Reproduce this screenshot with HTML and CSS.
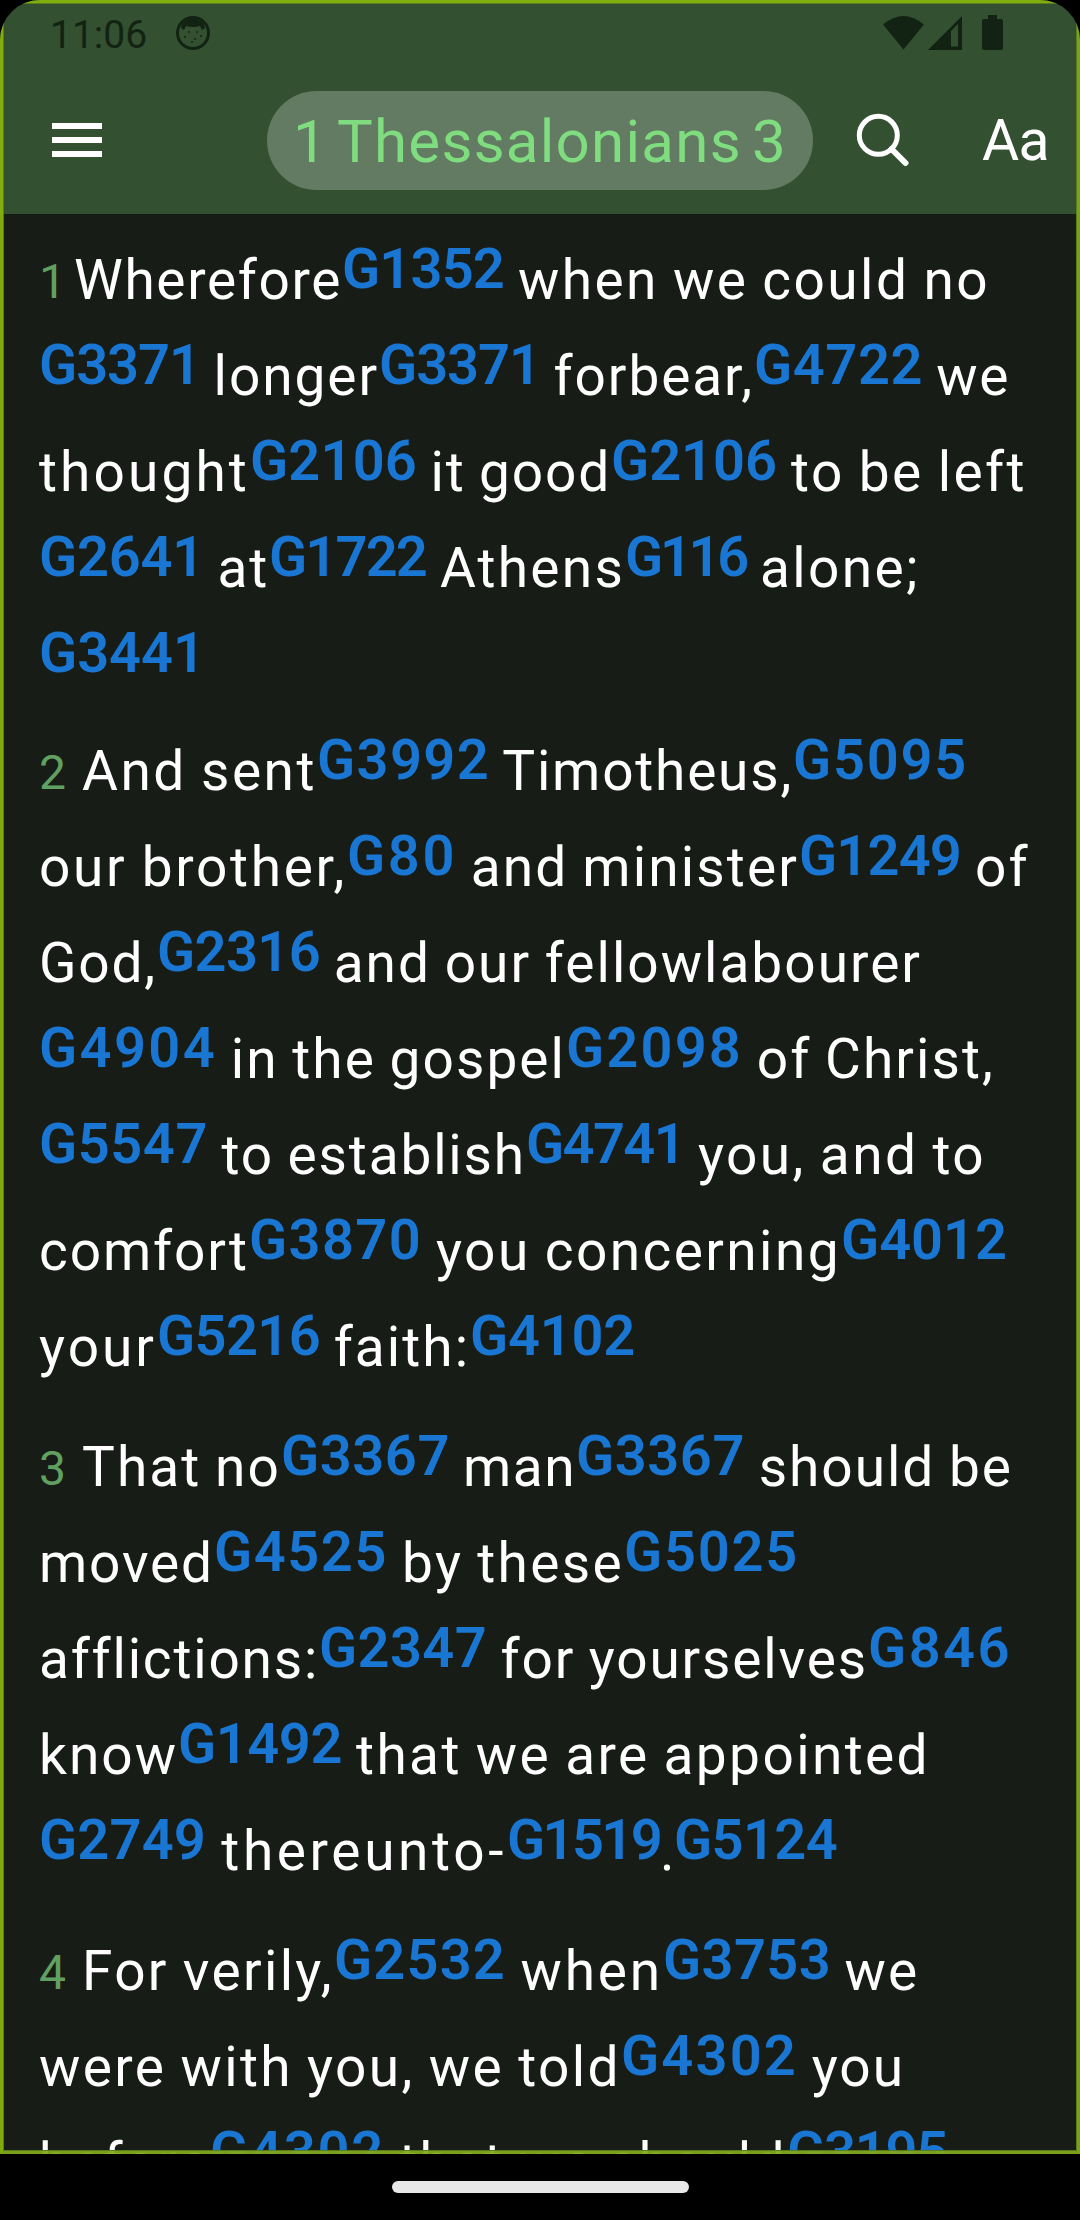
FILE: index.html
```html
<!DOCTYPE html>
<html lang="en">
<head>
  <meta charset="UTF-8" />
  <meta name="viewport" content="width=device-width, initial-scale=1.0"/>
  <title>1 Thessalonians 3</title>
  <link rel="stylesheet" href="styles.css">
</head>
<body>
  <div class="screen">
    <header>
      <div class="status">
        <span class="time">11:06</span>
        <svg class="face" width="36" height="36" viewBox="0 0 36 36">
          <circle cx="18" cy="18" r="15.5" fill="none" stroke="#132313" stroke-width="3"/>
          <path d="M6 13 L7 9 Q18 -2 29 9 L30 13 L27 15 L25 11 Q18 13 11 11 L9 15 Z" fill="#132313"/>
          <g fill="#132313"><circle cx="14" cy="17" r="1"/><circle cx="22" cy="17" r="1"/><circle cx="10" cy="22" r="1"/><circle cx="26" cy="21" r="1"/><circle cx="20" cy="24" r="1"/><circle cx="17" cy="27" r="1"/></g>
        </svg>
        <svg class="system" width="122" height="36" viewBox="0 0 122 36" fill="#132313">
          <path d="M0 9.5 Q20.500 -7.500 41 9.500 L20.500 34.500 Z"/>
          <path fill-rule="evenodd" d="M45 35 L79 1 V35 Z M68 16 V31.500 H75 V9 Z"/>
          <path d="M105 0 H114 V4 H118 Q120 4 120 6 V33 Q120 35 118 35 H101 Q99 35 99 33 V6 Q99 4 101 4 H105 Z"/>
        </svg>
      </div>
      <nav>
        <svg class="menu" width="50" height="34" viewBox="0 0 50 34" fill="#fff">
          <path d="M0 0H50V6H0ZM0 14H50V20H0ZM0 28H50V34H0Z"/>
        </svg>
        <div class="chapter"><span data-w="494">1 Thessalonians 3</span></div>
        <svg class="search" width="54" height="54" viewBox="0 0 54 54" fill="none" stroke="#fff">
          <circle cx="22.300" cy="22.300" r="19" stroke-width="5"/>
          <path d="M35.500 36 L49.500 50" stroke-width="6" stroke-linecap="round"/>
        </svg>
        <span class="size" data-w="67">Aa</span>
      </nav>
    </header>

    <main>
      <div class="verse short">
        <p><i data-x="74">1 </i><span data-x="342">Wherefore</span><b data-x="504">G1352</b><span data-x="990"> when we could no</span></p>
        <p><b data-x="200">G3371</b><span data-x="379">&nbsp;longer</span><b data-x="540">G3371</b><span data-x="754"> forbear,</span><b data-x="923">G4722</b><span data-x="1010"> we</span></p>
        <p><span data-x="250">thought</span><b data-x="417">G2106</b><span data-x="611"> it good</span><b data-x="777">G2106</b><span data-x="1027"> to be left</span></p>
        <p><b data-x="204">G2641</b><span data-x="269"> at</span><b data-x="426">G1722</b><span data-x="625"> Athens</span><b data-x="746">G116</b><span data-x="920"> alone;</span></p>
        <p><b data-x="205">G3441</b></p>
      </div>
      <div class="verse">
        <p><i data-x="82">2 </i><span data-x="317">And sent</span><b data-x="490">G3992</b><span data-x="793"> Timotheus,</span><b data-x="968">G5095</b></p>
        <p><span data-x="347">our brother,</span><b data-x="457">G80</b><span data-x="799"> and minister</span><b data-x="961">G1249</b><span data-x="1030"> of</span></p>
        <p><span data-x="157">God,</span><b data-x="320">G2316</b><span data-x="922"> and our fellowlabourer</span></p>
        <p><b data-x="217">G4904</b><span data-x="566"> in the gospel</span><b data-x="743">G2098</b><span data-x="995"> of Christ,</span></p>
        <p><b data-x="208">G5547</b><span data-x="526"> to establish</span><b data-x="684">G4741</b><span data-x="986"> you, and to</span></p>
        <p><span data-x="249">comfort</span><b data-x="422">G3870</b><span data-x="841"> you concerning</span><b data-x="1007">G4012</b></p>
        <p><span data-x="157">your</span><b data-x="320">G5216</b><span data-x="470"> faith:</span><b data-x="635">G4102</b></p>
      </div>
      <div class="verse">
        <p><i data-x="82">3 </i><span data-x="281">That no</span><b data-x="450">G3367</b><span data-x="576"> man</span><b data-x="745">G3367</b><span data-x="1013"> should be</span></p>
        <p><span data-x="214">moved</span><b data-x="388">G4525</b><span data-x="624"> by these</span><b data-x="799">G5025</b></p>
        <p><span data-x="319">afflictions:</span><b data-x="487">G2347</b><span data-x="868"> for yourselves</span><b data-x="1012">G846</b></p>
        <p><span data-x="178">know</span><b data-x="342">G1492</b><span data-x="930"> that we are appointed</span></p>
        <p><b data-x="206">G2749</b><span data-x="507"> thereunto-</span><b data-x="660">G1519</b><span data-x="674">.</span><b data-x="837">G5124</b></p>
      </div>
      <div class="verse">
        <p><i data-x="82">4 </i><span data-x="334">For verily,</span><b data-x="506">G2532</b><span data-x="663"> when</span><b data-x="831">G3753</b><span data-x="919"> we</span></p>
        <p><span data-x="621">were with you, we told</span><b data-x="798">G4302</b><span data-x="905"> you</span></p>
        <p><span data-x="210">before</span><b data-x="385">G4302</b><span data-x="787"> that we should</span><b data-x="947">G3195</b></p>
      </div>
    </main>
  </div>
  <div class="gesture"><div class="handle"></div></div>

  <script>
    // spread the letters of a run over its measure
    function fit(el, width) {
      const natural = el.getBoundingClientRect().width;
      el.style.letterSpacing = (width - natural) / el.textContent.length + "px";
    }

    document.querySelectorAll("[data-w]").forEach(el => fit(el, Number(el.dataset.w)));

    // data-x is where a run ends on its line
    document.querySelectorAll(".verse p").forEach(line => {
      let x = 39;
      for (const run of line.children) {
        const end = Number(run.dataset.x);
        fit(run, end - x);
        x = end;
      }
    });
  </script>
</body>
</html>
```
FILE: styles.css
```css
* {
  box-sizing: border-box;
}
body {
  margin: 0;
  background: #000;
  font-family: Roboto, sans-serif;
  font-variant-ligatures: none;
  width: 1080px;
  height: 2220px;
  overflow: hidden;
}
.screen {
  position: relative;
  height: 2154px;
  overflow: hidden;
  background: #181c17;
  color: #fff;
  border-radius: 40px 40px 0 0;
}
/* lime outline, drawn over the text */
.screen::after {
  content: "";
  position: absolute;
  inset: 0;
  border: 3px solid #87b50cee;
  border-right-color: #81a91fee;
  border-bottom-color: #81a91fee;
  box-shadow: inset 0 0 0 1px #587f1c;
}
header {
  height: 214px;
  background: #335031;
}
.status {
  display: flex;
  align-items: flex-start;
  height: 72px;
  padding: 15px 75px 0 50px;
}
.time {
  font-size: 39px;
  line-height: 40px;
  width: 125px;
  color: #132313;
}
.system {
  margin-left: auto;
}
nav {
  display: flex;
  align-items: center;
  height: 136px;
  padding-left: 52px;
}
nav .menu,
nav .chapter,
nav .search,
nav .size {
  flex: none;
}
.chapter {
  display: flex;
  align-items: center;
  width: 546px;
  height: 99px;
  margin-left: 165px;
  padding: 2px 0 0 26px;
  border-radius: 50px;
  background: #637b63;
  color: #7fdd7f;
  font-size: 60px;
  word-spacing: -6px;
  white-space: nowrap;
}
.search {
  margin-left: 43px;
}
.size {
  margin-left: 72px;
  font-size: 57px;
  padding-top: 1px;
}
main {
  padding: 18px 0 0 39px;
}
.verse {
  margin-bottom: 24px;
  font-size: 55px;
  line-height: 96px;
  word-spacing: -2px;
}
.verse.short {
  margin-bottom: 11px;
}
.verse p {
  display: flex;
  height: 96px;
  margin: 0;
  white-space: pre;
}
.verse i {
  color: #60a060;
  font-style: normal;
  font-size: 48px;
  padding-top: 2px;
}
.verse b {
  color: #1976d2;
  font-size: 56px;
  font-weight: 600;
  margin-top: -11px;
}
.gesture {
  display: flex;
  justify-content: center;
  padding-top: 27px;
}
.handle {
  width: 297px;
  height: 12px;
  border-radius: 6px;
  background: #e8e8e8;
}
```
